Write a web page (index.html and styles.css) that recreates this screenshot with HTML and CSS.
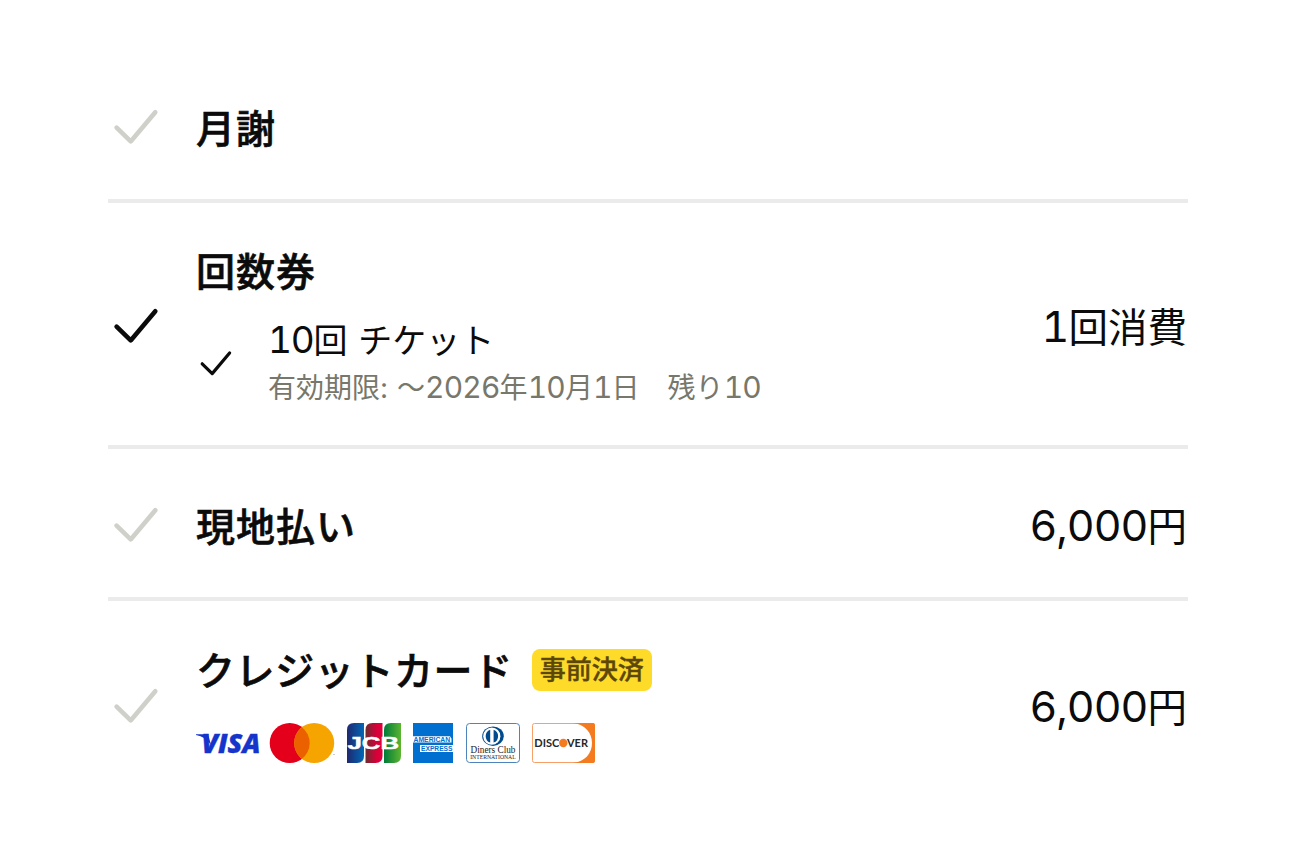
FILE: index.html
```html
<!DOCTYPE html>
<html lang="ja">
<head>
<meta charset="utf-8">
<title>お支払い方法</title>
<link rel="stylesheet" href="styles.css">
</head>
<body>
<ul class="methods">
  <li class="row">
    <svg class="check" viewBox="0 0 56 56"><path d="M8.6 30.6L22.7 44.4L47.3 15.2"/></svg>
    <div class="body"><h2 class="title">月謝</h2></div>
  </li>
  <li class="row row-ticket">
    <svg class="check selected" viewBox="0 0 56 56"><path d="M8.6 30.6L22.7 44.4L47.3 15.2"/></svg>
    <div class="body">
      <h2 class="title">回数券</h2>
      <div class="ticket">
        <svg class="check-small" viewBox="0 0 40 40"><path d="M6.2 20.8L16.2 30.6L33.6 10"/></svg>
        <div>
          <p class="ticket-name"><span class="num">10</span>回<span class="space"> </span>チケット</p>
          <p class="ticket-note">有効期限<span class="colon">: </span>～<span class="num">2026</span>年<span class="num">10</span>月<span class="num">1</span>日　残り<span class="num">10</span></p>
        </div>
      </div>
    </div>
    <p class="price"><span class="num">1</span>回消費</p>
  </li>
  <li class="row">
    <svg class="check" viewBox="0 0 56 56"><path d="M8.6 30.6L22.7 44.4L47.3 15.2"/></svg>
    <div class="body"><h2 class="title">現地払い</h2></div>
    <p class="price"><span class="num">6,000</span>円</p>
  </li>
  <li class="row row-card">
    <svg class="check" viewBox="0 0 56 56"><path d="M8.6 30.6L22.7 44.4L47.3 15.2"/></svg>
    <div class="body">
      <div class="heading"><h2 class="title kana">クレジットカード</h2><span class="badge">事前決済</span></div>
      <div class="brands">
        <svg width="65" height="40" viewBox="0 0 65 40">
          <path d="M0 11.2H9Q12 11.2 12.8 14L15 22Q9.5 13.5 0 12Z" fill="#1434cb"/>
          <text class="visa" x="5.5" y="30.4" textLength="59" lengthAdjust="spacingAndGlyphs">VISA</text>
        </svg>
        <svg class="mastercard" width="66" height="40" viewBox="0 0 66 40">
          <circle cx="19.7" cy="20" r="20" fill="#e4001b"/>
          <circle cx="44.2" cy="20" r="20" fill="#f6a500"/>
          <path d="M31.95 4.2A20 20 0 0 1 31.95 35.8A20 20 0 0 1 31.95 4.2Z" fill="#eb6100"/>
          <path d="M63 31.5h2" stroke="#aaa" stroke-width=".6"/>
        </svg>
        <svg class="jcb" width="54" height="40" viewBox="0 0 54 40">
          <defs>
            <linearGradient id="jb"><stop stop-color="#1f286f"/><stop offset="1" stop-color="#0068b7"/></linearGradient>
            <linearGradient id="jr"><stop stop-color="#6c2c2f"/><stop offset=".65" stop-color="#d7003a"/><stop offset="1" stop-color="#e0003c"/></linearGradient>
            <linearGradient id="jg"><stop stop-color="#007b3a"/><stop offset="1" stop-color="#5cb531"/></linearGradient>
          </defs>
          <path d="M0 40V7Q0 0 7 0H17V33Q17 40 10 40Z" fill="url(#jb)"/>
          <path d="M18.5 40V7Q18.5 0 25.5 0H35.5V33Q35.5 40 28.5 40Z" fill="url(#jr)"/>
          <path d="M37 40V7Q37 0 44 0H54V33Q54 40 47 40Z" fill="url(#jg)"/>
          <text class="jcb-text" x=".5" y="26.2" textLength="51.5" lengthAdjust="spacingAndGlyphs">JCB</text>
        </svg>
        <svg class="amex" width="40" height="40" viewBox="0 0 40 40">
          <path d="M0 0H40V40H0Z" fill="#006fcf"/>
          <path d="M0 13.2H37L38.5 15.5V19.6H0ZM7 22H40V29H7Z" fill="#fff"/>
          <text class="amex-text" x=".6" y="18.9" textLength="36.5" lengthAdjust="spacingAndGlyphs">AMERICAN</text>
          <text class="amex-text" x="8" y="28" textLength="31.5" lengthAdjust="spacingAndGlyphs">EXPRESS</text>
        </svg>
        <svg class="diners" width="54" height="40" viewBox="0 0 54 40">
          <rect x=".5" y=".5" width="53" height="39" rx="3.2" fill="#fff" stroke="#4c84bb"/>
          <ellipse cx="27" cy="13.2" rx="10.8" ry="9.7" fill="#004b8d"/>
          <circle cx="25.8" cy="13.2" r="8.6" fill="#fff"/>
          <path d="M24.2 6.8A6.8 6.8 0 0 0 24.2 19.6ZM27.6 6.8A6.8 6.8 0 0 1 27.6 19.6Z" fill="#004b8d"/>
          <text class="diners-name" x="4.5" y="30.4" textLength="45" lengthAdjust="spacingAndGlyphs">Diners Club</text>
          <text class="diners-sub" x="4.2" y="36" textLength="45.5" lengthAdjust="spacingAndGlyphs">INTERNATIONAL</text>
        </svg>
        <svg class="discover" width="63" height="40" viewBox="0 0 63 40">
          <rect x=".5" y=".5" width="62" height="39" rx="2" fill="#fff" stroke="#f7a06a"/>
          <path d="M41 0H61Q63 0 63 2V38Q63 40 61 40H41C53 39 60 30 60 20S53 1 41 0Z" fill="#f47b20"/>
          <text class="discover-text" x="2.3" y="24.2" textLength="25" lengthAdjust="spacingAndGlyphs">DISC</text>
          <circle cx="31.3" cy="20" r="4.2" fill="#f47b20"/>
          <text class="discover-text" x="35" y="24.2" textLength="21" lengthAdjust="spacingAndGlyphs">VER</text>
        </svg>
      </div>
    </div>
    <p class="price"><span class="num">6,000</span>円</p>
  </li>
</ul>
</body>
</html>
```
FILE: styles.css
```css
* { box-sizing: border-box; }
body {
  margin: 0;
  background: #fff;
  color: #0b0b0b;
  font-family: "Noto Sans CJK JP", sans-serif;
}
h2, p { margin: 0; }
svg { overflow: visible; }
.methods {
  list-style: none;
  margin: 0;
  padding: 51px 108px 0;
}
.row {
  display: grid;
  grid-template-columns: 56px 1fr auto;
  column-gap: 32px;
  align-items: center;
  height: 152px;
  border-bottom: 4px solid #ebebeb;
}
.row-ticket { height: 246px; }
.row-card { height: 206px; border-bottom: 0; }
.check {
  width: 56px;
  height: 56px;
  fill: none;
  stroke: #d0d0cb;
  stroke-width: 4.6;
  stroke-linecap: round;
  stroke-linejoin: round;
}
.check.selected { stroke: #0b0b0b; }
.title {
  font-size: 39px;
  letter-spacing: 1px;
  font-weight: 500;
  -webkit-text-stroke: .6px currentColor;
  line-height: 56px;
  white-space: nowrap;
}
.title.kana { letter-spacing: .6px; }
.body { padding-top: 1px; }
.num {
  font-family: Inter, sans-serif;
  font-weight: 400;
  font-variant-numeric: tabular-nums;
}
.ticket {
  display: flex;
  align-items: center;
  margin-top: 18px;
  gap: 32px;
}
.check-small {
  width: 40px;
  height: 40px;
  fill: none;
  stroke: #0b0b0b;
  stroke-width: 3.2;
  stroke-linecap: round;
  stroke-linejoin: round;
}
.ticket-name {
  font-size: 34px;
  line-height: 48px;
  white-space: nowrap;
}
.ticket-name .num { font-size: 37px; letter-spacing: -1.2px; }
.ticket-name .space { letter-spacing: 3px; }
.ticket-note {
  color: #77776b;
  font-size: 28px;
  line-height: 44px;
  white-space: nowrap;
}
.ticket-note .num { font-size: 30px; letter-spacing: -.8px; }
.ticket-note .colon { font-family: Inter, sans-serif; letter-spacing: .5px; }
.row-ticket .body { padding-top: 3px; }
.price {
  font-size: 39.5px;
  line-height: 56px;
  padding: 2px 1px 0 0;
  white-space: nowrap;
}
.price .num { font-size: 43px; letter-spacing: -1px; }
.heading { display: flex; align-items: center; }
.badge {
  width: 120px;
  height: 42px;
  margin-left: 19px;
  border-radius: 8px;
  background: #ffdb29;
  color: #5c4708;
  font-size: 26px;
  font-weight: 500;
  -webkit-text-stroke: .4px currentColor;
  line-height: 38px;
  text-align: center;
}
.row-card .body { padding-top: 0; padding-bottom: 3px; }
.row-card .title { line-height: 52px; padding-bottom: 4px; }
.brands { display: flex; height: 40px; margin-top: 25px; }
.mastercard { margin-left: 8.5px; }
.jcb { margin-left: 11.5px; }
.amex { margin-left: 12px; }
.diners { margin-left: 13px; }
.discover { margin-left: 12px; }
.visa {
  font: italic 900 26px "Open Sans", sans-serif;
  fill: #1434cb;
  stroke: #1434cb;
  stroke-width: .4;
}
.jcb-text { font: bold 17px "Liberation Sans", sans-serif; fill: #fff; stroke: #fff; stroke-width: .5; }
.amex-text { font: bold 7px "Liberation Sans", sans-serif; fill: #006fcf; }
.diners-name { font: 11px "Liberation Serif", serif; fill: #222; }
.diners-sub { font: 5.5px "Liberation Serif", serif; fill: #222; }
.discover-text { font: bold 11.5px "Lato", sans-serif; fill: #25282a; }
```
